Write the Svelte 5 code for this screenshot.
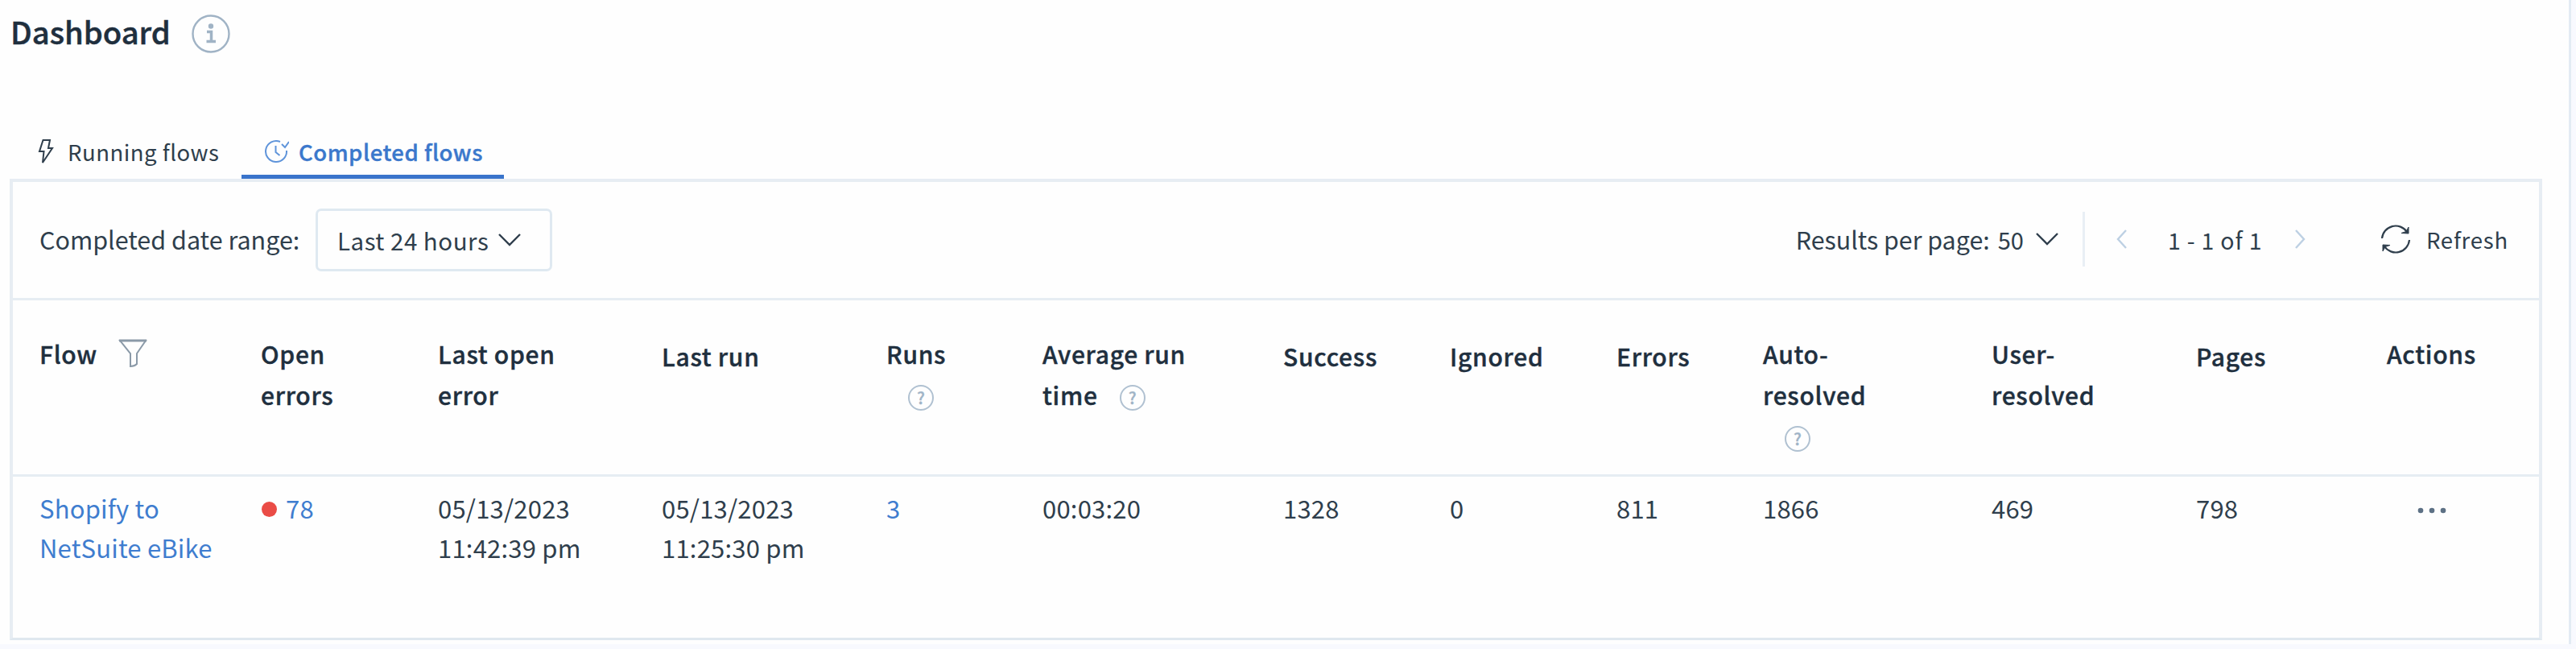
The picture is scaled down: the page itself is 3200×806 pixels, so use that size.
<script>
    let perPage = 50;
    let range = 'Last 24 hours';

    const columns = [
        { name: 'Flow', lines: ['Flow'], filter: true, width: 275 },
        { name: 'Open errors', lines: ['Open', 'errors'], width: 220 },
        { name: 'Last open error', lines: ['Last open', 'error'], width: 278 },
        { name: 'Last run', lines: ['Last run'], sortable: true, width: 279 },
        { name: 'Runs', lines: ['Runs', ''], help: true, width: 194 },
        { name: 'Average run time', lines: ['Average run', 'time'], help: true, width: 299 },
        { name: 'Success', lines: ['Success'], sortable: true, width: 207 },
        { name: 'Ignored', lines: ['Ignored'], sortable: true, width: 207 },
        { name: 'Errors', lines: ['Errors'], sortable: true, width: 182 },
        { name: 'Auto-resolved', lines: ['Auto-', 'resolved', ''], help: true, width: 284 },
        { name: 'User-resolved', lines: ['User-', 'resolved'], width: 254 },
        { name: 'Pages', lines: ['Pages'], sortable: true, width: 237 },
        { name: 'Actions', lines: ['Actions'], width: 110 }
    ];

    const flows = [
        {
            name: ['Shopify to', 'NetSuite eBike'],
            openErrors: 78,
            lastError: ['05/13/2023', '11:42:39 pm'],
            lastRun: ['05/13/2023', '11:25:30 pm'],
            runs: 3,
            counts: ['00:03:20', 1328, 0, 811, 1866, 469, 798]
        }
    ];

    const template = columns.map(column => column.width + 'px').join(' ');
</script>

<div class="page">
    <main>
        <header>
            <h1>Dashboard</h1>
            <svg class="info" width="48" height="48" viewBox="0 0 48 48">
                <circle cx="24" cy="24" r="22.5" />
                <path d="M19 21.500h5.500v11.500M18.500 33.500h11.500" />
                <circle class="point" cx="24" cy="14.500" r="2" />
            </svg>
        </header>

        <nav>
            <button class="tab">
                <svg width="20" height="32" viewBox="0 0 20 32">
                    <path d="M6.500 2h8.500l-2 10h5L6 30l1.500-14H2z" />
                </svg>
                <span>Running flows</span>
            </button>
            <button class="tab active">
                <svg width="30" height="30" viewBox="0 0 30 30">
                    <path d="M19 3A13 13 0 1 0 27 14M13.500 8v8l5 4M21 6l4 4 5-7" />
                </svg>
                <span>Completed flows</span>
            </button>
        </nav>

        <section>
            <div class="toolbar">
                <span class="label">Completed date range:</span>
                <button class="select">
                    <span>{range}</span>
                    <svg width="30" height="18" viewBox="0 0 30 18"><path d="M2 2l13 13L28 2" /></svg>
                </button>
                <div class="paging">
                    <span class="results">Results per page:</span>
                    <span class="count">{perPage}</span>
                    <svg class="down" width="30" height="18" viewBox="0 0 30 18"><path d="M2 2l13 13L28 2" /></svg>
                    <i></i>
                    <svg class="arrow" width="16" height="26" viewBox="0 0 16 26"><path d="M13 2L3 13l10 11" /></svg>
                    <span class="pages">1 - 1 of 1</span>
                    <svg class="arrow" width="16" height="26" viewBox="0 0 16 26"><path d="M3 2l10 11L3 24" /></svg>
                    <button class="refresh">
                        <svg width="38" height="38" viewBox="0 0 38 38">
                            <path d="M2 18A17 17 0 0 1 33 10M36 20A17 17 0 0 1 5 28" />
                            <path class="solid" d="M35 4v8l-9-.500 6-2zM3 34v-8l9 .500-6 2z" />
                        </svg>
                        <span>Refresh</span>
                    </button>
                </div>
            </div>

            <div class="row head" style="grid-template-columns: {template}">
                {#each columns as column}
                    <div class="th" class:sortable={column.sortable}>
                        {#each column.lines as line, index}
                            <div class="line">
                                <span>{line}</span>
                                {#if column.filter}
                                    <svg class="funnel" width="36" height="38" viewBox="0 0 36 38">
                                        <path d="M2 3h32L23 19v13q-3 3-8 3V19z" />
                                        <path class="rim" d="M1 3h34" />
                                    </svg>
                                {/if}
                                {#if column.help && index === column.lines.length - 1}
                                    <span class="help">?</span>
                                {/if}
                            </div>
                        {/each}
                    </div>
                {/each}
            </div>

            {#each flows as flow}
                <div class="row body" style="grid-template-columns: {template}">
                    <a href="#flow">{flow.name[0]}<br />{flow.name[1]}</a>
                    <a href="#errors" class="errors"><b></b>{flow.openErrors}</a>
                    <div>{flow.lastError[0]}<br />{flow.lastError[1]}</div>
                    <div>{flow.lastRun[0]}<br />{flow.lastRun[1]}</div>
                    <a href="#runs">{flow.runs}</a>
                    {#each flow.counts as count}
                        <div>{count}</div>
                    {/each}
                    <svg class="more" width="36" height="8" viewBox="0 0 36 8">
                        <circle cx="4" cy="4" r="3.300" />
                        <circle cx="18" cy="4" r="3.300" />
                        <circle cx="32" cy="4" r="3.300" />
                    </svg>
                </div>
            {/each}
        </section>
    </main>
</div>

<style>
    :global(body) {
        background: #f8f9fe;
    }

    .page {
        height: 806px;
        overflow: hidden;
        color: #2f3e4c;
        font-family: "Noto Sans CJK SC", "Noto Sans", sans-serif;
        font-size: 31px;
    }

    main {
        box-sizing: border-box;
        width: 3194px;
        height: 800px;
        padding-left: 12px;
        background: #fefefe;
        border-right: 3px solid #e3ebf3;
    }

    header {
        display: flex;
        align-items: center;
        gap: 26px;
        height: 84px;
    }

    h1 {
        margin: 0 0 6px 1px;
        color: #1f2f3e;
        font-size: 38.200px;
        font-weight: 500;
        line-height: 56px;
        -webkit-text-stroke: 0.500px;
    }

    svg {
        flex: none;
        fill: none;
        stroke: currentColor;
        stroke-width: 2.400;
    }

    .info {
        color: #a0b3c5;
    }

    .info path {
        stroke-width: 3.500;
    }

    .info .point {
        fill: currentColor;
    }

    button {
        display: flex;
        align-items: center;
        padding: 0;
        background: none;
        border: none;
        color: inherit;
        font: inherit;
        white-space: nowrap;
    }

    nav {
        display: flex;
        height: 138px;
        align-items: flex-end;
    }

    .tab {
        box-sizing: border-box;
        width: 288px;
        height: 68px;
        padding: 0 0 1px 35px;
        gap: 17px;
        font-size: 27.500px;
        letter-spacing: 0.500px;
    }

    .tab svg {
        stroke-width: 2;
    }

    .tab.active {
        width: 326px;
        height: 68px;
        padding: 0 0 1px 29px;
        gap: 12px;
        color: #3b78cc;
        font-weight: 500;
        box-shadow: inset 0 -5px #3974cb;
        -webkit-text-stroke: 0.400px;
    }

    .tab.active svg {
        color: #5f94da;
    }

    section {
        box-sizing: border-box;
        width: 3146px;
        height: 573px;
        border: 4px solid #e7edf3;
        border-bottom: 3px solid #dfe8ef;
    }

    .toolbar {
        box-sizing: border-box;
        display: flex;
        align-items: center;
        height: 147px;
        padding: 0 38px 2px 33px;
        border-bottom: 3px solid #e6edf3;
    }

    .label {
        width: 343px;
        font-size: 30.500px;
        white-space: nowrap;
    }

    .select {
        box-sizing: border-box;
        width: 294px;
        height: 78px;
        margin-top: 2px;
        padding-left: 24px;
        gap: 11px;
        border: 3px solid #dfe9f1;
        border-radius: 7px;
        font-size: 29.500px;
        letter-spacing: 0.500px;
    }

    .paging {
        display: flex;
        align-items: center;
        margin-left: auto;
        white-space: nowrap;
    }

    .results {
        margin-right: 10px;
        font-size: 30.400px;
    }

    .count {
        margin-right: 14px;
        font-size: 29px;
    }

    .paging i {
        width: 3px;
        height: 68px;
        margin: 0 38px 0 29px;
        background: #e9eff5;
    }

    .arrow {
        color: #bdd0e3;
    }

    .pages {
        width: 120px;
        margin: 0 36px 0 49px;
        font-size: 28.500px;
        letter-spacing: 0.800px;
    }

    .refresh {
        gap: 19px;
        margin-left: 92px;
        font-size: 27.500px;
        letter-spacing: 0.800px;
    }

    .refresh svg {
        stroke-width: 2.200;
    }

    .refresh .solid {
        fill: currentColor;
        stroke-width: 1;
    }

    .row {
        display: grid;
        padding-left: 33px;
    }

    .head {
        box-sizing: border-box;
        height: 219px;
        padding-top: 41px;
        border-bottom: 3px solid #e6edf3;
        color: #202f3e;
        font-size: 30px;
        font-weight: 500;
        letter-spacing: 0.700px;
        -webkit-text-stroke: 0.400px;
    }

    .line {
        display: flex;
        align-items: center;
        height: 50.500px;
        white-space: nowrap;
    }

    .sortable {
        padding-top: 3px;
    }

    .funnel {
        margin: -1px 0 0 26px;
        color: #8b9aa8;
        stroke-width: 2;
    }

    .funnel .rim {
        stroke-width: 3;
    }

    .help {
        box-sizing: border-box;
        width: 32px;
        height: 32px;
        margin: 9px 0 0 27px;
        border: 2px solid #b0c1d1;
        border-radius: 50%;
        color: #9fb3c6;
        font-size: 20px;
        letter-spacing: 0;
        line-height: 28px;
        text-align: center;
    }

    .body {
        padding-top: 14px;
        letter-spacing: 0.200px;
        line-height: 49px;
    }

    a {
        color: #3f7dcf;
        text-decoration: none;
    }

    .errors {
        display: flex;
        align-items: center;
        height: 49px;
    }

    .errors b {
        width: 19px;
        height: 19px;
        margin: 4px 11px 0 1px;
        background: #ea4c46;
        border-radius: 50%;
    }

    .more {
        margin: 24px 0 0 38px;
        color: #5d7185;
        fill: currentColor;
        stroke: none;
    }
</style>
